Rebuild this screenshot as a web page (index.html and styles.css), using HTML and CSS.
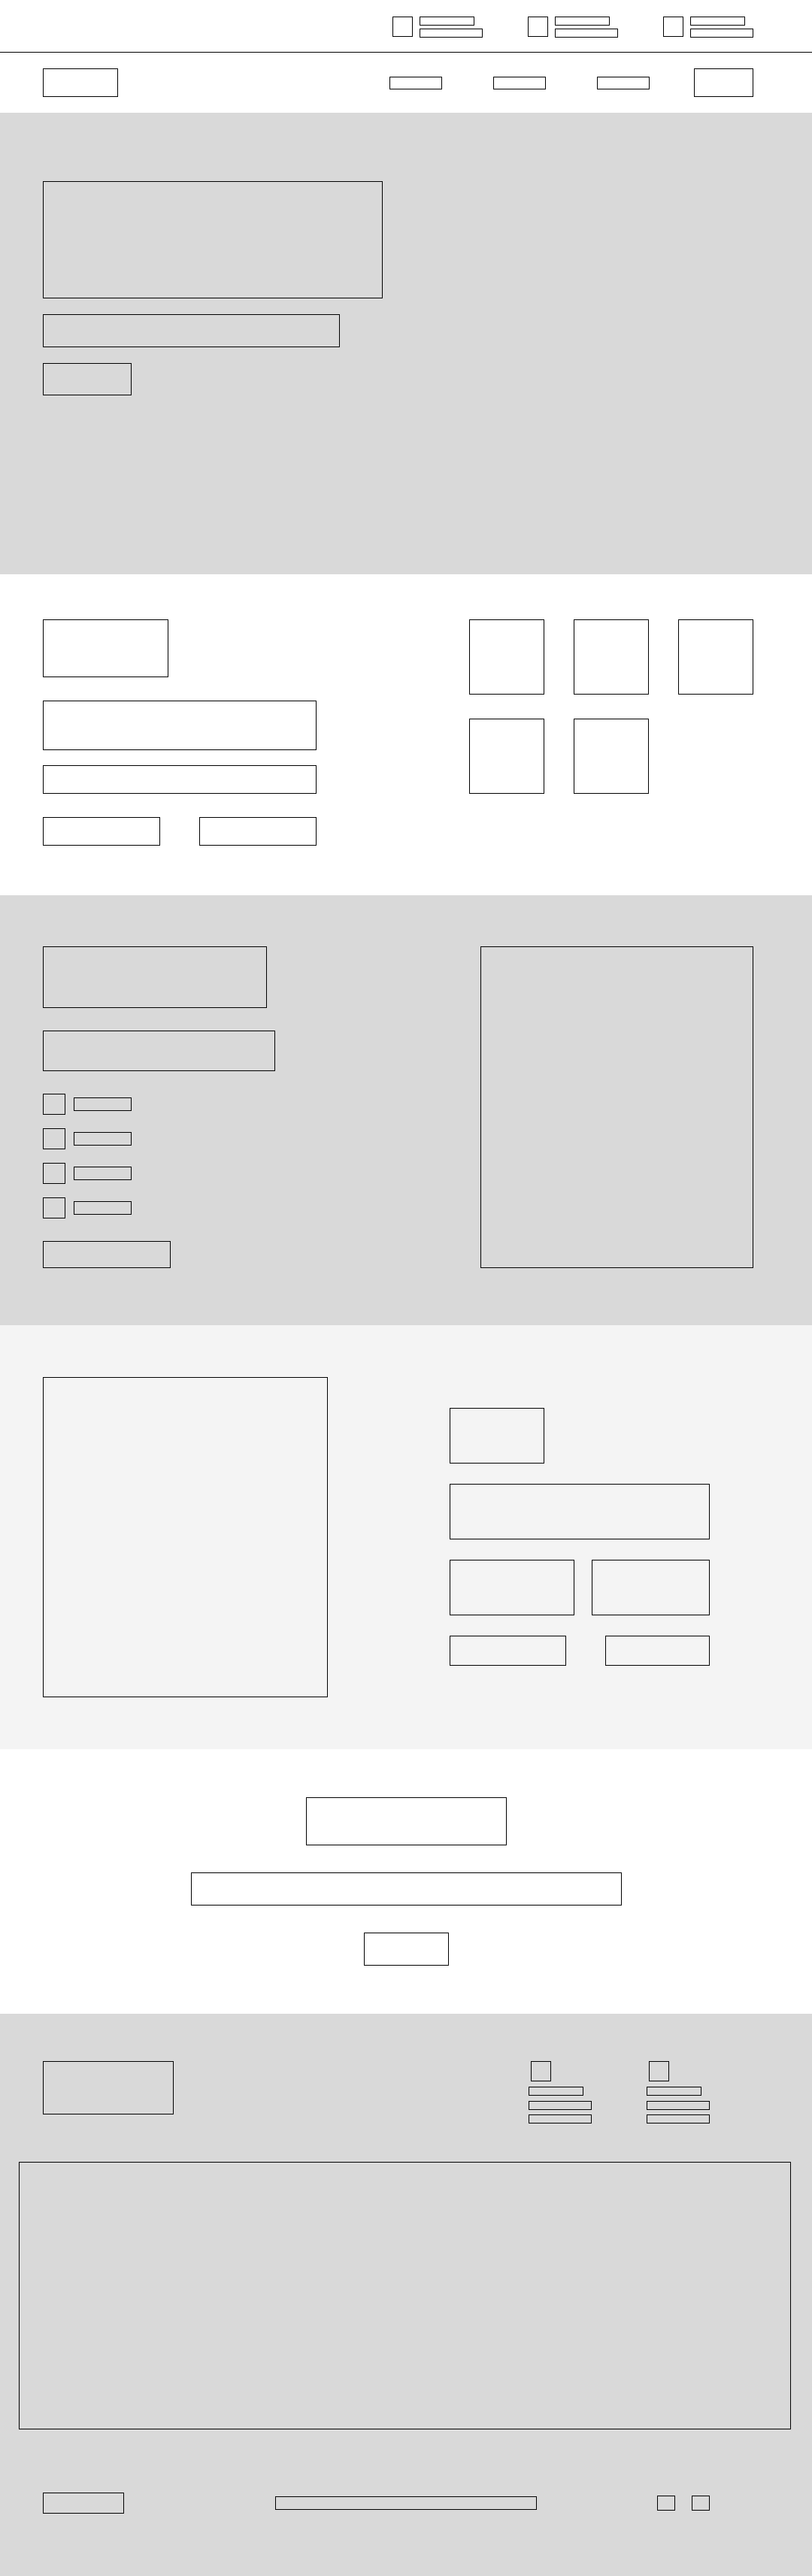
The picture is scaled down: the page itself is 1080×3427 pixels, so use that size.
FILE: index.html
```html
<!DOCTYPE html>
<html lang="en">
<head>
<meta charset="utf-8">
<title>Wireframe</title>
<link rel="stylesheet" href="styles.css">
</head>
<body>
<header class="topbar">
  <div class="contacts">
    <div class="contact"><div class="box ico"></div><div class="lines"><div class="box bar-s"></div><div class="box bar-l"></div></div></div>
    <div class="contact"><div class="box ico"></div><div class="lines"><div class="box bar-s"></div><div class="box bar-l"></div></div></div>
    <div class="contact"><div class="box ico"></div><div class="lines"><div class="box bar-s"></div><div class="box bar-l"></div></div></div>
  </div>
</header>
<nav class="navbar">
  <div class="box nav-logo"></div>
  <div class="menu">
    <div class="links">
      <div class="box nav-link"></div>
      <div class="box nav-link"></div>
      <div class="box nav-link"></div>
    </div>
    <div class="box nav-cta"></div>
  </div>
</nav>
<section class="hero">
  <div class="box hero-title"></div>
  <div class="box hero-sub"></div>
  <div class="box hero-btn"></div>
</section>
<section class="features">
  <div class="feat-left">
    <div class="box feat-head"></div>
    <div class="box feat-text"></div>
    <div class="box feat-line"></div>
    <div class="feat-btns">
      <div class="box feat-btn"></div>
      <div class="box feat-btn"></div>
    </div>
  </div>
  <div class="feat-grid">
    <div class="box tile"></div>
    <div class="box tile"></div>
    <div class="box tile"></div>
    <div class="box tile"></div>
    <div class="box tile"></div>
  </div>
</section>
<section class="about">
  <div class="about-left">
    <div class="box about-head"></div>
    <div class="box about-text"></div>
    <ul class="checklist">
      <li class="check"><div class="box check-ico"></div><div class="box check-bar"></div></li>
      <li class="check"><div class="box check-ico"></div><div class="box check-bar"></div></li>
      <li class="check"><div class="box check-ico"></div><div class="box check-bar"></div></li>
      <li class="check"><div class="box check-ico"></div><div class="box check-bar"></div></li>
    </ul>
    <div class="box about-btn"></div>
  </div>
  <div class="box about-media"></div>
</section>
<section class="showcase">
  <div class="box show-media"></div>
  <div class="show-right">
    <div class="box show-badge"></div>
    <div class="box show-wide"></div>
    <div class="show-pair">
      <div class="box show-a"></div>
      <div class="box show-b"></div>
    </div>
    <div class="show-btns">
      <div class="box show-btn1"></div>
      <div class="box show-btn2"></div>
    </div>
  </div>
</section>
<section class="cta">
  <div class="box cta-title"></div>
  <div class="box cta-text"></div>
  <div class="box cta-btn"></div>
</section>
<footer class="footer">
  <div class="foot-top">
    <div class="box foot-logo"></div>
    <div class="foot-cols">
      <div class="foot-col"><div class="box foot-ico"></div><div class="box fbar-s"></div><div class="box fbar-l"></div><div class="box fbar-l last"></div></div>
      <div class="foot-col"><div class="box foot-ico"></div><div class="box fbar-s"></div><div class="box fbar-l"></div><div class="box fbar-l last"></div></div>
    </div>
  </div>
  <div class="box foot-map"></div>
  <div class="foot-bottom">
    <div class="box foot-mini"></div>
    <div class="box foot-copy"></div>
    <div class="foot-social">
      <div class="box soc"></div>
      <div class="box soc"></div>
    </div>
  </div>
</footer>
</body>
</html>
```

FILE: styles.css
```css
* { box-sizing: border-box; margin: 0; padding: 0; }
html, body { width: 1080px; }
body { background: #ffffff; font-family: "Liberation Sans", Arial, sans-serif; }
.box { border: 1px solid #000; flex: none; }

/* top bar */
.topbar { height: 70px; border-bottom: 1px solid #000; display: flex; justify-content: flex-end; padding: 22px 78px 0 0; }
.contacts { display: flex; gap: 60px; align-items: flex-start; }
.contact { display: flex; gap: 9px; align-items: flex-start; }
.ico { width: 27px; height: 27px; }
.lines { display: flex; flex-direction: column; gap: 4px; }
.bar-s { width: 73px; height: 12px; }
.bar-l { width: 84px; height: 12px; }

/* nav */
.navbar { height: 80px; display: flex; align-items: center; justify-content: space-between; padding: 0 78px 0 57px; }
.nav-logo { width: 100px; height: 38px; }
.menu { display: flex; align-items: center; gap: 59px; }
.links { display: flex; gap: 68px; }
.nav-link { width: 70px; height: 17px; }
.nav-cta { width: 79px; height: 38px; }

/* hero */
.hero { height: 614px; background: #d9d9d9; padding: 91px 0 0 57px; display: flex; flex-direction: column; gap: 21px; align-items: flex-start; }
.hero-title { width: 452px; height: 156px; }
.hero-sub { width: 395px; height: 44px; }
.hero-btn { width: 118px; height: 43px; }

/* features */
.features { height: 427px; padding: 60px 78px 0 57px; display: flex; justify-content: space-between; align-items: flex-start; }
.feat-left { display: flex; flex-direction: column; align-items: flex-start; }
.feat-head { width: 167px; height: 77px; }
.feat-text { width: 364px; height: 66px; margin-top: 31px; }
.feat-line { width: 364px; height: 38px; margin-top: 20px; }
.feat-btns { display: flex; justify-content: space-between; width: 364px; margin-top: 31px; }
.feat-btn { width: 156px; height: 38px; }
.feat-grid { display: grid; grid-template-columns: repeat(3, 100px); column-gap: 39px; row-gap: 32px; }
.tile { width: 100px; height: 100px; }

/* about */
.about { height: 572px; background: #d9d9d9; padding: 68px 78px 0 57px; display: flex; justify-content: space-between; align-items: flex-start; }
.about-left { display: flex; flex-direction: column; align-items: flex-start; }
.about-head { width: 298px; height: 82px; }
.about-text { width: 309px; height: 54px; margin-top: 30px; }
.checklist { list-style: none; display: flex; flex-direction: column; gap: 18px; margin-top: 30px; }
.check { display: flex; align-items: center; gap: 11px; }
.check-ico { width: 30px; height: 28px; }
.check-bar { width: 77px; height: 18px; }
.about-btn { width: 170px; height: 36px; margin-top: 30px; }
.about-media { width: 363px; height: 428px; }

/* showcase */
.showcase { height: 564px; background: #f4f4f4; padding: 69px 0 0 57px; display: flex; align-items: flex-start; gap: 162px; }
.show-media { width: 379px; height: 426px; }
.show-right { width: 346px; margin-top: 41px; display: flex; flex-direction: column; gap: 27px; align-items: flex-start; }
.show-badge { width: 126px; height: 74px; }
.show-wide { width: 346px; height: 74px; }
.show-pair { display: flex; gap: 23px; }
.show-a { width: 166px; height: 74px; }
.show-b { width: 157px; height: 74px; }
.show-btns { display: flex; justify-content: space-between; width: 346px; }
.show-btn1 { width: 155px; height: 40px; }
.show-btn2 { width: 139px; height: 40px; }

/* cta */
.cta { height: 352px; padding-top: 64px; display: flex; flex-direction: column; align-items: center; gap: 36px; }
.cta-title { width: 267px; height: 64px; }
.cta-text { width: 573px; height: 44px; }
.cta-btn { width: 113px; height: 44px; }

/* footer */
.footer { height: 748px; background: #d9d9d9; padding-top: 63px; }
.foot-top { display: flex; justify-content: space-between; align-items: flex-start; padding: 0 136px 0 57px; }
.foot-logo { width: 174px; height: 71px; }
.foot-cols { display: flex; gap: 73px; }
.foot-col { display: flex; flex-direction: column; align-items: flex-start; gap: 7px; width: 84px; }
.foot-ico { width: 27px; height: 27px; margin-left: 3px; }
.fbar-s { width: 73px; height: 12px; }
.fbar-l { width: 84px; height: 12px; }
.fbar-l.last { margin-top: -1px; }
.foot-map { width: 1027px; height: 356px; margin: 51px 0 0 25px; }
.foot-bottom { display: grid; grid-template-columns: 1fr 348px 1fr; align-items: center; padding: 0 57px; margin-top: 84px; height: 28px; }
.foot-mini { width: 108px; height: 28px; }
.foot-copy { width: 348px; height: 18px; }
.foot-social { display: flex; gap: 22px; justify-self: end; margin-right: 79px; }
.soc { width: 24px; height: 20px; }
```
